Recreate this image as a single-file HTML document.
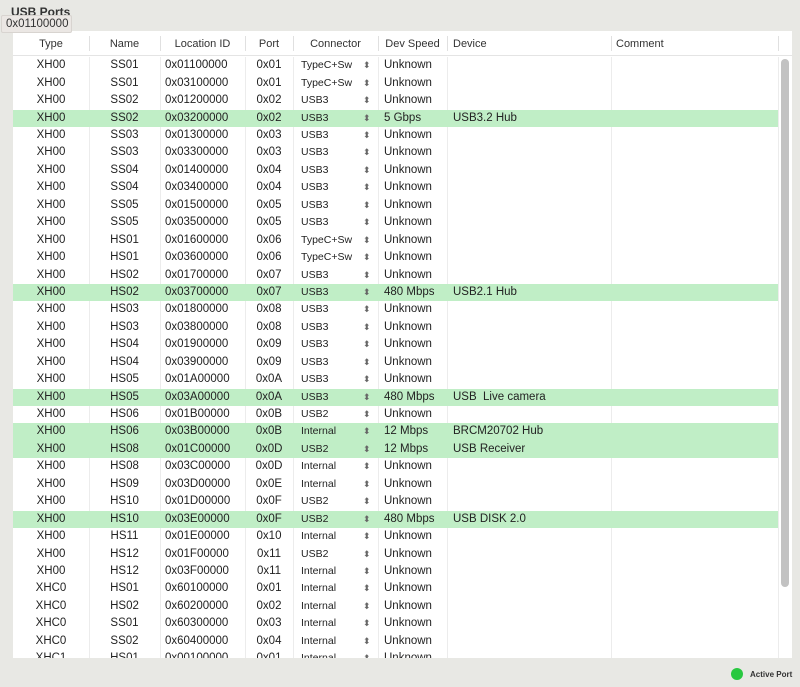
<!DOCTYPE html>
<html><head><meta charset="utf-8"><style>
*{margin:0;padding:0;box-sizing:border-box}
body{width:800px;height:687px;background:#e8e8e4;font-family:"Liberation Sans",Arial,sans-serif;position:relative;overflow:hidden;color:#222}
#title{position:absolute;left:11px;top:5px;font-size:12px;font-weight:bold;color:#333}
#tip{position:absolute;left:1px;top:15px;width:71px;height:18px;background:#ebe7e4;border:1px solid #d8d4d0;font-size:11.5px;line-height:16px;padding-left:4px;color:#333;border-radius:2px}
#tbl{position:absolute;left:13px;top:31px;width:779px;height:627px;background:#fff;overflow:hidden}
#hdr{position:absolute;left:0;top:0;width:779px;height:25px;border-bottom:1px solid #e4e4e4;font-size:11px;color:#333}
#hdr span{position:absolute;top:7px}
.hs{position:absolute;top:5px;width:1px;height:15px;background:#e0e0e0}
#rows{position:absolute;left:0;top:26.3px;width:779px}
.r{height:17.45px;position:relative;font-size:11.5px;line-height:17.45px;white-space:nowrap}
.g{background:#c0eec6;width:765px}
.r span{position:absolute;top:0}
.c0{left:0;width:76px;text-align:center}
.c1{left:76px;width:71px;text-align:center}
.c2{left:152px}
.c3{left:232px;width:48px;text-align:center}
.c4{left:288px;font-size:10.5px}
.c5{left:350px;font-size:9px;color:#666}
.c6{left:371px}
.c7{left:440px}
.vs{position:absolute;top:26px;width:1px;height:601px;background:#ececec}
#thumb{position:absolute;left:768px;top:28px;width:8px;height:528px;background:#c2c2c2;border-radius:4px}
#dot{position:absolute;left:731px;top:668px;width:12px;height:12px;border-radius:50%;background:#28c840}
#ap{position:absolute;left:750px;top:670px;font-size:8px;font-weight:bold;color:#333}
</style></head><body>
<div id="title">USB Ports</div>
<div id="tbl">
<div id="hdr">
<span style="left:0;width:76px;text-align:center">Type</span>
<span style="left:76px;width:71px;text-align:center">Name</span>
<span style="left:147px;width:85px;text-align:center">Location ID</span>
<span style="left:232px;width:48px;text-align:center">Port</span>
<span style="left:280px;width:85px;text-align:center">Connector</span>
<span style="left:365px;width:69px;text-align:center">Dev Speed</span>
<span style="left:440px">Device</span>
<span style="left:603px">Comment</span>
<div class="hs" style="left:76px"></div><div class="hs" style="left:147px"></div><div class="hs" style="left:232px"></div><div class="hs" style="left:280px"></div><div class="hs" style="left:365px"></div><div class="hs" style="left:434px"></div><div class="hs" style="left:598px"></div><div class="hs" style="left:765px"></div>
</div>
<div class="vs" style="left:76px"></div><div class="vs" style="left:147px"></div><div class="vs" style="left:232px"></div><div class="vs" style="left:280px"></div><div class="vs" style="left:365px"></div><div class="vs" style="left:434px"></div><div class="vs" style="left:598px"></div><div class="vs" style="left:765px"></div>
<div id="rows">
<div class="r"><span class="c0">XH00</span><span class="c1">SS01</span><span class="c2">0x01100000</span><span class="c3">0x01</span><span class="c4">TypeC+Sw</span><span class="c5">⬍</span><span class="c6">Unknown</span></div>
<div class="r"><span class="c0">XH00</span><span class="c1">SS01</span><span class="c2">0x03100000</span><span class="c3">0x01</span><span class="c4">TypeC+Sw</span><span class="c5">⬍</span><span class="c6">Unknown</span></div>
<div class="r"><span class="c0">XH00</span><span class="c1">SS02</span><span class="c2">0x01200000</span><span class="c3">0x02</span><span class="c4">USB3</span><span class="c5">⬍</span><span class="c6">Unknown</span></div>
<div class="r g"><span class="c0">XH00</span><span class="c1">SS02</span><span class="c2">0x03200000</span><span class="c3">0x02</span><span class="c4">USB3</span><span class="c5">⬍</span><span class="c6">5 Gbps</span><span class="c7">USB3.2 Hub</span></div>
<div class="r"><span class="c0">XH00</span><span class="c1">SS03</span><span class="c2">0x01300000</span><span class="c3">0x03</span><span class="c4">USB3</span><span class="c5">⬍</span><span class="c6">Unknown</span></div>
<div class="r"><span class="c0">XH00</span><span class="c1">SS03</span><span class="c2">0x03300000</span><span class="c3">0x03</span><span class="c4">USB3</span><span class="c5">⬍</span><span class="c6">Unknown</span></div>
<div class="r"><span class="c0">XH00</span><span class="c1">SS04</span><span class="c2">0x01400000</span><span class="c3">0x04</span><span class="c4">USB3</span><span class="c5">⬍</span><span class="c6">Unknown</span></div>
<div class="r"><span class="c0">XH00</span><span class="c1">SS04</span><span class="c2">0x03400000</span><span class="c3">0x04</span><span class="c4">USB3</span><span class="c5">⬍</span><span class="c6">Unknown</span></div>
<div class="r"><span class="c0">XH00</span><span class="c1">SS05</span><span class="c2">0x01500000</span><span class="c3">0x05</span><span class="c4">USB3</span><span class="c5">⬍</span><span class="c6">Unknown</span></div>
<div class="r"><span class="c0">XH00</span><span class="c1">SS05</span><span class="c2">0x03500000</span><span class="c3">0x05</span><span class="c4">USB3</span><span class="c5">⬍</span><span class="c6">Unknown</span></div>
<div class="r"><span class="c0">XH00</span><span class="c1">HS01</span><span class="c2">0x01600000</span><span class="c3">0x06</span><span class="c4">TypeC+Sw</span><span class="c5">⬍</span><span class="c6">Unknown</span></div>
<div class="r"><span class="c0">XH00</span><span class="c1">HS01</span><span class="c2">0x03600000</span><span class="c3">0x06</span><span class="c4">TypeC+Sw</span><span class="c5">⬍</span><span class="c6">Unknown</span></div>
<div class="r"><span class="c0">XH00</span><span class="c1">HS02</span><span class="c2">0x01700000</span><span class="c3">0x07</span><span class="c4">USB3</span><span class="c5">⬍</span><span class="c6">Unknown</span></div>
<div class="r g"><span class="c0">XH00</span><span class="c1">HS02</span><span class="c2">0x03700000</span><span class="c3">0x07</span><span class="c4">USB3</span><span class="c5">⬍</span><span class="c6">480 Mbps</span><span class="c7">USB2.1 Hub</span></div>
<div class="r"><span class="c0">XH00</span><span class="c1">HS03</span><span class="c2">0x01800000</span><span class="c3">0x08</span><span class="c4">USB3</span><span class="c5">⬍</span><span class="c6">Unknown</span></div>
<div class="r"><span class="c0">XH00</span><span class="c1">HS03</span><span class="c2">0x03800000</span><span class="c3">0x08</span><span class="c4">USB3</span><span class="c5">⬍</span><span class="c6">Unknown</span></div>
<div class="r"><span class="c0">XH00</span><span class="c1">HS04</span><span class="c2">0x01900000</span><span class="c3">0x09</span><span class="c4">USB3</span><span class="c5">⬍</span><span class="c6">Unknown</span></div>
<div class="r"><span class="c0">XH00</span><span class="c1">HS04</span><span class="c2">0x03900000</span><span class="c3">0x09</span><span class="c4">USB3</span><span class="c5">⬍</span><span class="c6">Unknown</span></div>
<div class="r"><span class="c0">XH00</span><span class="c1">HS05</span><span class="c2">0x01A00000</span><span class="c3">0x0A</span><span class="c4">USB3</span><span class="c5">⬍</span><span class="c6">Unknown</span></div>
<div class="r g"><span class="c0">XH00</span><span class="c1">HS05</span><span class="c2">0x03A00000</span><span class="c3">0x0A</span><span class="c4">USB3</span><span class="c5">⬍</span><span class="c6">480 Mbps</span><span class="c7">USB&nbsp; Live camera</span></div>
<div class="r"><span class="c0">XH00</span><span class="c1">HS06</span><span class="c2">0x01B00000</span><span class="c3">0x0B</span><span class="c4">USB2</span><span class="c5">⬍</span><span class="c6">Unknown</span></div>
<div class="r g"><span class="c0">XH00</span><span class="c1">HS06</span><span class="c2">0x03B00000</span><span class="c3">0x0B</span><span class="c4">Internal</span><span class="c5">⬍</span><span class="c6">12 Mbps</span><span class="c7">BRCM20702 Hub</span></div>
<div class="r g"><span class="c0">XH00</span><span class="c1">HS08</span><span class="c2">0x01C00000</span><span class="c3">0x0D</span><span class="c4">USB2</span><span class="c5">⬍</span><span class="c6">12 Mbps</span><span class="c7">USB Receiver</span></div>
<div class="r"><span class="c0">XH00</span><span class="c1">HS08</span><span class="c2">0x03C00000</span><span class="c3">0x0D</span><span class="c4">Internal</span><span class="c5">⬍</span><span class="c6">Unknown</span></div>
<div class="r"><span class="c0">XH00</span><span class="c1">HS09</span><span class="c2">0x03D00000</span><span class="c3">0x0E</span><span class="c4">Internal</span><span class="c5">⬍</span><span class="c6">Unknown</span></div>
<div class="r"><span class="c0">XH00</span><span class="c1">HS10</span><span class="c2">0x01D00000</span><span class="c3">0x0F</span><span class="c4">USB2</span><span class="c5">⬍</span><span class="c6">Unknown</span></div>
<div class="r g"><span class="c0">XH00</span><span class="c1">HS10</span><span class="c2">0x03E00000</span><span class="c3">0x0F</span><span class="c4">USB2</span><span class="c5">⬍</span><span class="c6">480 Mbps</span><span class="c7">USB DISK 2.0</span></div>
<div class="r"><span class="c0">XH00</span><span class="c1">HS11</span><span class="c2">0x01E00000</span><span class="c3">0x10</span><span class="c4">Internal</span><span class="c5">⬍</span><span class="c6">Unknown</span></div>
<div class="r"><span class="c0">XH00</span><span class="c1">HS12</span><span class="c2">0x01F00000</span><span class="c3">0x11</span><span class="c4">USB2</span><span class="c5">⬍</span><span class="c6">Unknown</span></div>
<div class="r"><span class="c0">XH00</span><span class="c1">HS12</span><span class="c2">0x03F00000</span><span class="c3">0x11</span><span class="c4">Internal</span><span class="c5">⬍</span><span class="c6">Unknown</span></div>
<div class="r"><span class="c0">XHC0</span><span class="c1">HS01</span><span class="c2">0x60100000</span><span class="c3">0x01</span><span class="c4">Internal</span><span class="c5">⬍</span><span class="c6">Unknown</span></div>
<div class="r"><span class="c0">XHC0</span><span class="c1">HS02</span><span class="c2">0x60200000</span><span class="c3">0x02</span><span class="c4">Internal</span><span class="c5">⬍</span><span class="c6">Unknown</span></div>
<div class="r"><span class="c0">XHC0</span><span class="c1">SS01</span><span class="c2">0x60300000</span><span class="c3">0x03</span><span class="c4">Internal</span><span class="c5">⬍</span><span class="c6">Unknown</span></div>
<div class="r"><span class="c0">XHC0</span><span class="c1">SS02</span><span class="c2">0x60400000</span><span class="c3">0x04</span><span class="c4">Internal</span><span class="c5">⬍</span><span class="c6">Unknown</span></div>
<div class="r"><span class="c0">XHC1</span><span class="c1">HS01</span><span class="c2">0x00100000</span><span class="c3">0x01</span><span class="c4">Internal</span><span class="c5">⬍</span><span class="c6">Unknown</span></div>
</div>
<div id="thumb"></div>
</div>
<div id="tip">0x01100000</div>
<div id="dot"></div>
<div id="ap">Active Port</div>
</body></html>
